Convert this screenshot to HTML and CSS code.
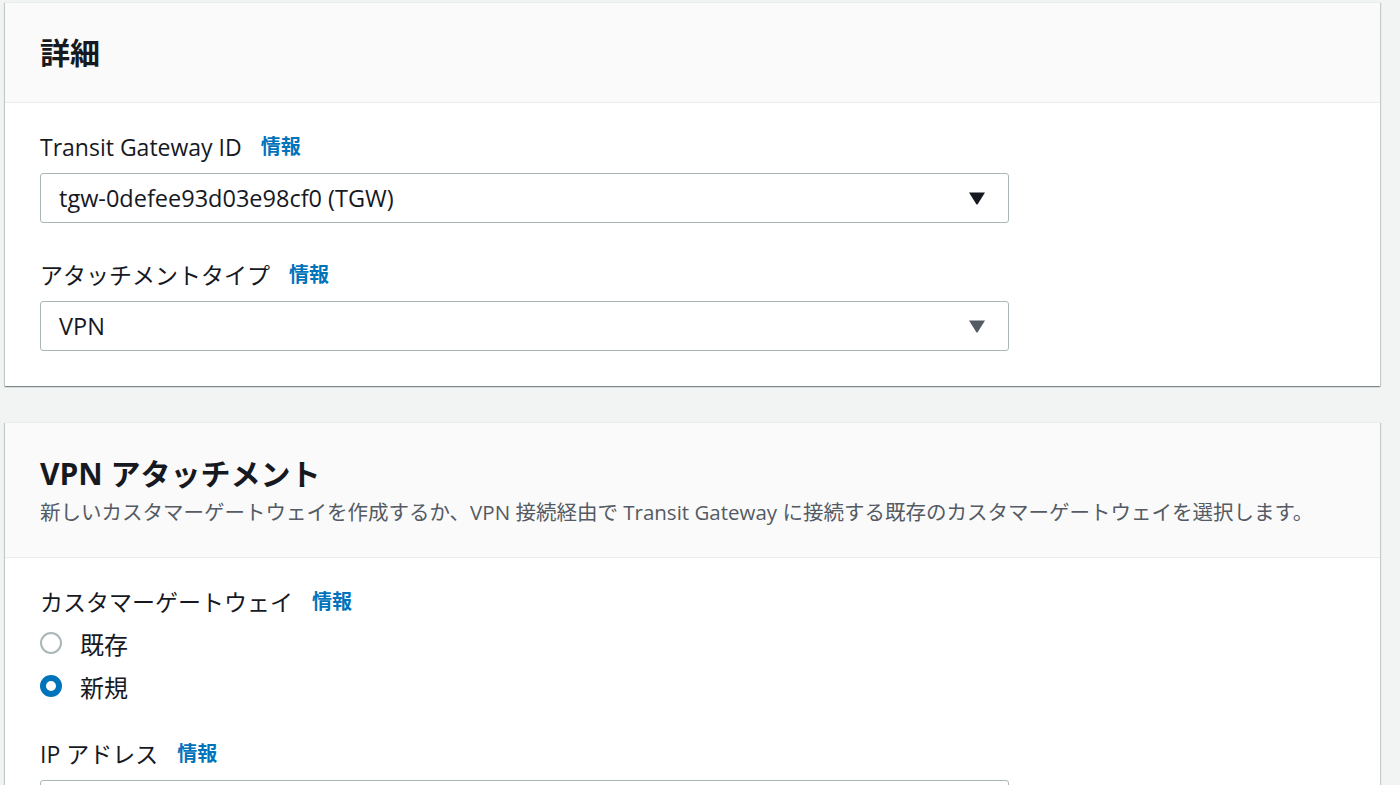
FILE: index.html
```html
<!DOCTYPE html>
<html lang="ja">
<head>
<meta charset="utf-8">
<link rel="stylesheet" href="styles.css">
</head>
<body>
<div class="page">
  <section class="panel first">
    <header class="panel-header">
      <h2 class="panel-title">詳細</h2>
    </header>
    <div class="panel-body">
      <div class="field">
        <div class="label">Transit Gateway ID <a class="info">情報</a></div>
        <div class="select">
          <span class="select-value">tgw-0defee93d03e98cf0 (TGW)</span>
          <svg class="caret" width="18" height="14" viewBox="0 0 18 14"><path d="M1 1.5 H17 L9.8 13 Q9 14 8.2 13 Z" fill="#16191f"/></svg>
        </div>
      </div>
      <div class="field">
        <div class="label">アタッチメントタイプ <a class="info">情報</a></div>
        <div class="select">
          <span class="select-value">VPN</span>
          <svg class="caret" width="18" height="14" viewBox="0 0 18 14"><path d="M1 1.5 H17 L9.8 13 Q9 14 8.2 13 Z" fill="#545b64"/></svg>
        </div>
      </div>
    </div>
  </section>

  <section class="panel">
    <header class="panel-header tall">
      <h2 class="panel-title">VPN アタッチメント</h2>
      <p class="panel-desc">新しいカスタマーゲートウェイを作成するか、VPN 接続経由で Transit Gateway に接続する既存のカスタマーゲートウェイを選択します。</p>
    </header>
    <div class="panel-body">
      <div class="field">
        <div class="label">カスタマーゲートウェイ <a class="info">情報</a></div>
        <div class="radios">
          <div class="radio-row"><span class="radio"></span><span class="radio-text">既存</span></div>
          <div class="radio-row"><span class="radio checked"></span><span class="radio-text">新規</span></div>
        </div>
      </div>
      <div class="field">
        <div class="label">IP アドレス <a class="info">情報</a></div>
        <div class="input"></div>
      </div>
    </div>
  </section>
</div>
</body>
</html>
```

FILE: styles.css
```css
html, body {
  margin: 0;
  padding: 0;
  background: #f2f3f3;
  height: 785px;
  overflow: hidden;
}
body {
  font-family: "Open Sans", "Noto Sans CJK JP", sans-serif;
  color: #16191f;
}
.page {
  padding: 2px 20px 0 5px;
  display: flex;
  flex-direction: column;
  gap: 36px;
}
.panel {
  background: #ffffff;
  box-shadow: 0 1px 1px 0 rgba(0, 28, 36, 0.3), 1px 1px 1px 0 rgba(0, 28, 36, 0.15), -1px 1px 1px 0 rgba(0, 28, 36, 0.15);
  border-top: 1px solid #eaeded;
}
.panel-header {
  background: #fafafa;
  border-bottom: 1px solid #eaeded;
  padding: 33px 35px 32px 35px;
}
.panel-header.tall {
  padding: 34px 35px 30px 35px;
}
.panel-title {
  margin: 0;
  font-size: 30px;
  line-height: 34px;
  height: 34px;
  font-weight: 700;
}
.panel-desc {
  margin: 6px 0 0 0;
  font-size: 20.5px;
  line-height: 30px;
  height: 30px;
  color: #545b64;
  white-space: nowrap;
}
.panel-body {
  padding: 30px 35px 35px 35px;
  display: flex;
  flex-direction: column;
  gap: 38px;
}
.label {
  display: flex;
  align-items: center;
  gap: 19px;
  height: 28px;
  font-size: 23px;
  line-height: 28px;
  margin-bottom: 12px;
  white-space: nowrap;
}
.info {
  color: #0073bb;
  font-weight: 700;
  font-size: 20px;
}
.select, .input {
  width: 969px;
  height: 50px;
  box-sizing: border-box;
  border: 1px solid #aab7b8;
  border-radius: 3px;
  display: flex;
  align-items: center;
  justify-content: space-between;
  padding: 0 22px 0 18px;
  font-size: 23.5px;
}
.caret {
  display: block;
}
.radios {
  display: flex;
  flex-direction: column;
  gap: 11px;
  margin-top: -1px;
}
.radio-row {
  display: flex;
  align-items: center;
  height: 32px;
  gap: 18px;
}
.radio {
  width: 22px;
  height: 22px;
  box-sizing: border-box;
  border-radius: 50%;
  border: 2px solid #aab7b8;
  background: #fff;
}
.radio.checked {
  border: 6.5px solid #0073bb;
}
.radio-text {
  font-size: 24px;
}
.field:last-child .input {
  margin-top: 1px;
}
```
